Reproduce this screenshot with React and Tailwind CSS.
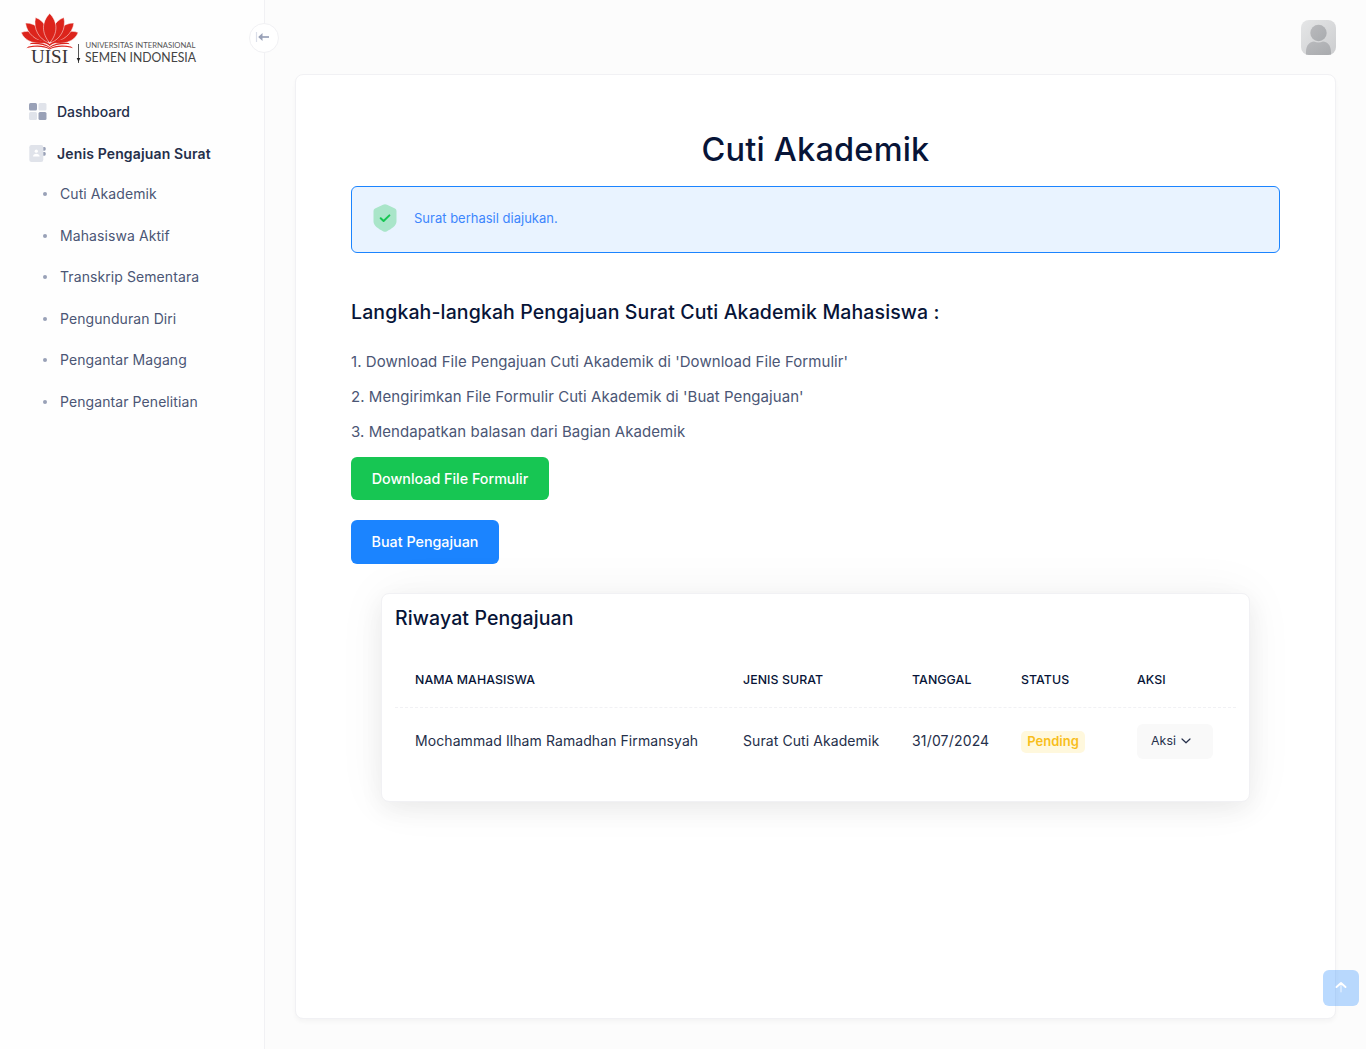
const items = [
  { label: 'Cuti Akademik', cls: 'h-[41px]' },
  { label: 'Mahasiswa Aktif', cls: 'h-[42px]' },
  { label: 'Transkrip Sementara', cls: 'h-[41px]' },
  { label: 'Pengunduran Diri', cls: 'h-[42px]' },
  { label: 'Pengantar Magang', cls: 'h-[41px]' },
  { label: 'Pengantar Penelitian', cls: 'h-[42px]' },
];

function Logo() {
  return (
    <svg width="200" height="56" viewBox="0 0 200 56" className="block overflow-visible">
      <g fill="#dc241c" stroke="#fff" strokeWidth="0.5">
        <path d="M1.2 18.5C9 15.5 21 18 27.5 29C16 30.5 5 28 1.2 18.5Z" />
        <path d="M58.2 18.5C50.4 15.5 38.4 18 31.9 29C43.4 30.5 54.4 28 58.2 18.5Z" />
        <path d="M5.5 9C16 9 26 17 28 29C16 27 7 20 5.5 9Z" />
        <path d="M53.9 9C43.4 9 33.4 17 31.4 29C43.4 27 52.4 20 53.9 9Z" />
        <path d="M15.5 3.5C25 7 30 17 28.8 29C19 25 13 15 15.5 3.5Z" />
        <path d="M43.9 3.5C34.4 7 29.4 17 30.6 29C40.4 25 46.4 15 43.9 3.5Z" />
        <path d="M29.7 -0.5C38 8 38 19 29.7 29C21.4 19 21.4 8 29.7 -0.5Z" />
      </g>
      <g fill="#dc241c">
        <path d="M10 25.5C18 25 26 27 29.7 30C33.4 27 41.4 25 49.4 25.5L48 27.3C40 26.8 33 28.5 29.7 32C26.4 28.5 19.4 26.8 11.4 27.3Z" />
        <path d="M11 28.9C18 28.3 25 29.4 29.7 33C34.4 29.4 41.4 28.3 48.4 28.9L49.8 30.2C41 29.7 34 31 29.7 34C25.4 31 18.4 29.7 9.6 30.2Z" />
        <path d="M8.5 32.5C16 30.7 25 31.2 29.7 34.4C34.4 31.2 43.4 30.7 50.9 32.5L53 34.2C44 32 35 32.3 29.7 35.5C24.4 32.3 15.4 32 6.4 34.2Z" />
      </g>
      <text x="11" y="49" fontFamily="'Liberation Serif', serif" fontSize="18" fill="#3a3535" textLength="37" lengthAdjust="spacingAndGlyphs">UISI</text>
      <path d="M58.5 30V49" stroke="#555" strokeWidth="1" />
      <path d="M56.7 44H60.3L58.5 48Z" fill="#222" />
      <text x="65.5" y="34" fontFamily="Lato, sans-serif" fontSize="8.4" fill="#555" textLength="110" lengthAdjust="spacingAndGlyphs">UNIVERSITAS INTERNASIONAL</text>
      <text x="65" y="48" fontFamily="Lato, sans-serif" fontSize="12.6" fill="#444" textLength="111" lengthAdjust="spacingAndGlyphs">SEMEN INDONESIA</text>
    </svg>
  );
}

function DashboardIcon() {
  return (
    <svg width="18" height="18" viewBox="0 0 18 18" className="mt-px">
      <rect x="0" y="0" width="8" height="7.5" rx="1.5" fill="#99A1B7" />
      <rect x="9.5" y="0" width="8" height="7.5" rx="1.5" fill="#e0e3ea" />
      <rect x="0" y="9" width="8" height="8" rx="1.5" fill="#e0e3ea" />
      <rect x="9.5" y="9" width="8" height="8" rx="1.5" fill="#99A1B7" />
    </svg>
  );
}

function AddressBookIcon() {
  return (
    <svg width="18" height="18" viewBox="0 0 18 18" className="mt-px">
      <rect x="0.3" y="0" width="14" height="17" rx="2.2" fill="#e0e3ea" />
      <circle cx="7.3" cy="6.2" r="1.6" fill="#fff" />
      <path d="M4 11.5C4 7.8 10.6 7.8 10.6 11.5Z" fill="#fff" />
      <path d="M14.3 2H15.5Q16.8 2 16.8 3.8T15.5 5.8H14.3ZM14.3 7H15.5Q16.8 7 16.8 8.8T15.5 10.8H14.3Z" fill="#99A1B7" />
    </svg>
  );
}

export default function App() {
  return (
    <div className="flex h-[1049px] w-[1366px] overflow-hidden bg-[#fcfcfc] font-['Inter',sans-serif] text-[#071437]">
      <aside className="relative w-[265px] shrink-0 border-r border-[#f1f1f4] bg-[#fefefe]">
        <div className="pt-[14px] pl-5"><Logo /></div>
        <button className="absolute top-[23px] left-[249px] flex h-[30px] w-[30px] items-center justify-center rounded-full border border-[#f1f1f4] bg-white">
          <svg width="16" height="14" viewBox="0 0 16 14" fill="none" className="-mt-[2px] -ml-[2px]">
            <path d="M1.5 2V12" stroke="#dbdfe9" strokeWidth="1.2" />
            <path d="M7 7H14" stroke="#99A1B7" strokeWidth="1.7" />
            <path d="M3.2 7L7.5 3V11Z" fill="#99A1B7" />
          </svg>
        </button>
        <nav className="pt-[20px]">
          <div className="flex h-[42px] items-center pl-[29px] text-[14px] font-medium text-[#252F4A]">
            <DashboardIcon /><span className="ml-[10px]">Dashboard</span>
          </div>
          <div className="flex h-[42px] items-center pl-[29px] text-[14px] font-semibold tracking-[0.01em] text-[#252F4A]">
            <AddressBookIcon /><span className="ml-[10px]">Jenis Pengajuan Surat</span>
          </div>
          <ul className="-mt-px text-[14px] tracking-[0.006em] text-[#4B5675]">
            {items.map((item) => (
              <li key={item.label} className={`flex items-center pl-[43px] ${item.cls}`}>
                <span className="mt-px mr-[13px] h-1 w-1 rounded-full bg-[#99A1B7]" />{item.label}
              </li>
            ))}
          </ul>
        </nav>
      </aside>

      <div className="relative flex flex-1 flex-col pr-[30.5px] pl-[30px]">
        <header className="flex h-[74px] shrink-0 items-center justify-end">
          <svg width="35" height="35" viewBox="0 0 35 35" className="rounded-[8px]">
            <defs>
              <linearGradient id="avatarBg" x1="0" y1="0" x2="1" y2="1"><stop stopColor="#e5e6e7" /><stop offset="1" stopColor="#cccdcf" /></linearGradient>
              <linearGradient id="avatarFg" x1="0" y1="0" x2="1" y2="1"><stop stopColor="#b9babd" /><stop offset="1" stopColor="#a9abae" /></linearGradient>
            </defs>
            <rect width="35" height="35" fill="url(#avatarBg)" />
            <circle cx="17.5" cy="13" r="8.2" fill="url(#avatarFg)" />
            <path d="M5 35V32C5 25 9 21.5 13 21.5Q17.5 23.5 22 21.5C26 21.5 30 25 30 32V35Z" fill="url(#avatarFg)" />
          </svg>
        </header>
        <main className="h-[945px] rounded-[8px] border border-[#f1f1f4] bg-white px-[55px] shadow-[0_3px_4px_rgba(0,0,0,0.03)]">
          <h1 className="pt-[55px] text-center text-[32.5px] leading-[40px] font-medium tracking-[0.006em]">Cuti Akademik</h1>
          <div className="mt-[16px] flex h-[67px] items-center rounded-[6px] border border-[#1B84FF] bg-[#E9F3FF] pl-[21px]">
            <svg width="24" height="28" viewBox="0 0 24 28" className="-mt-[3px]">
              <path d="M10 0.7Q12 -0.2 14 0.7L22 4.4Q23.5 5.2 23.5 7V17.5C23.5 22 18 25 14 27.2Q12 28.2 10 27.2C6 25 0.5 22 0.5 17.5V7Q0.5 5.2 2 4.4Z" fill="#a9e5c9" />
              <path d="M7.7 14.2L10.6 17L16.4 11.4" fill="none" stroke="#17C653" strokeWidth="2" strokeLinecap="round" strokeLinejoin="round" />
            </svg>
            <span className="-mt-[2px] ml-[17px] text-[13px] text-[#3d86fd]">Surat berhasil diajukan.</span>
          </div>
          <h3 className="mt-[47px] text-[19.5px] leading-6 font-medium tracking-[0.0062em]">Langkah-langkah Pengajuan Surat Cuti Akademik Mahasiswa :</h3>
          <ol className="mt-5 text-[15px] leading-[35px] tracking-[0.004em] text-[#4B5675]">
            <li>1. Download File Pengajuan Cuti Akademik di 'Download File Formulir'</li>
            <li>2. Mengirimkan File Formulir Cuti Akademik di 'Buat Pengajuan'</li>
            <li>3. Mendapatkan balasan dari Bagian Akademik</li>
          </ol>
          <button className="mt-2 flex h-[43px] w-[198px] items-center justify-center rounded-[6px] bg-[#17C653] text-[14.3px] font-medium text-white">Download File Formulir</button>
          <button className="mt-5 flex h-[44px] w-[148px] items-center justify-center rounded-[6px] bg-[#1B84FF] text-[14.3px] font-medium text-white">Buat Pengajuan</button>
          <section className="mx-[30px] mt-[29px] h-[209px] rounded-[8px] border border-[#f1f1f4] bg-white px-[13px] pt-[12px] shadow-[0_0_50px_rgba(0,0,0,0.05),0_8px_24px_rgba(0,0,0,0.06)]">
            <h3 className="text-[19.5px] leading-6 font-medium tracking-[0.006em]">Riwayat Pengajuan</h3>
            <div className="mt-[22px] grid h-[56px] grid-cols-[328px_169px_109px_116px_99px] items-center border-b border-dashed border-[#f1f1f4] pt-[2px] pl-[20px] text-[12.35px] font-medium tracking-[0.006em]">
              <span>NAMA MAHASISWA</span><span>JENIS SURAT</span><span>TANGGAL</span><span>STATUS</span><span>AKSI</span>
            </div>
            <div className="grid h-[67px] grid-cols-[328px_169px_109px_116px_99px] items-center pl-[20px] text-[14px] tracking-[0.006em] text-[#252F4A]">
              <span className="-mt-[2px]">Mochammad Ilham Ramadhan Firmansyah</span><span className="-mt-[2px]">Surat Cuti Akademik</span><span className="-mt-[2px] tracking-[0.012em]">31/07/2024</span>
              <span className="flex h-[22px] w-[64px] items-center justify-center rounded-[5px] bg-[#FFF8DD] text-[13px] font-semibold tracking-normal text-[#F8BE1C]">Pending</span>
              <button className="flex h-[35px] w-[76px] items-center rounded-[6px] bg-[#f9f9f9] pl-[14px] text-[12.35px]">
                Aksi
                <svg width="10" height="6" viewBox="0 0 10 6" className="mb-px ml-[5px]" fill="none" stroke="#252F4A" strokeWidth="1.2" strokeLinecap="round" strokeLinejoin="round"><path d="M1 1L5 4.8L9 1" /></svg>
              </button>
            </div>
          </section>
        </main>
        <button className="absolute right-[7.5px] bottom-[43px] flex h-9 w-9 justify-center rounded-[6px] bg-[#1B84FF]/30 pt-[9px]">
          <svg width="12" height="14" viewBox="0 0 12 14" fill="none" strokeLinecap="round" strokeLinejoin="round">
            <path d="M6 5V12.5" stroke="#fff" strokeOpacity="0.4" strokeWidth="2" />
            <path d="M1.5 8L6 4L10.5 8" stroke="#fff" strokeWidth="1.9" />
          </svg>
        </button>
      </div>
    </div>
  );
}
